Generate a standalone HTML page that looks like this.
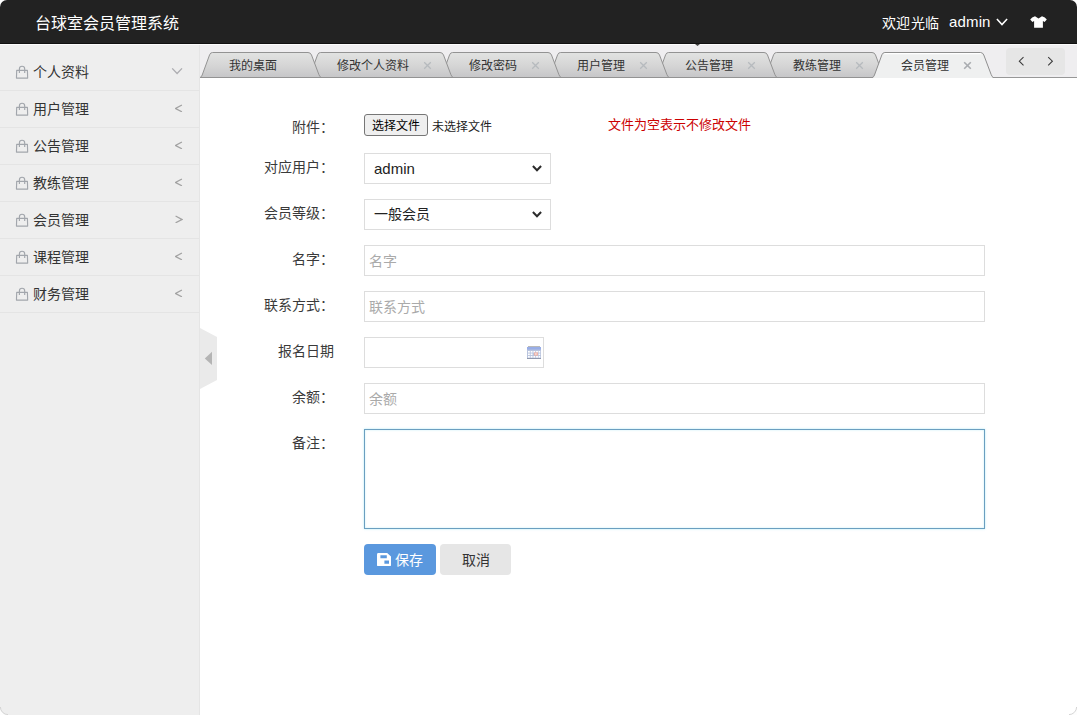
<!DOCTYPE html>
<html lang="zh-CN">
<head>
<meta charset="utf-8">
<title>台球室会员管理系统</title>
<style>
*{box-sizing:border-box;margin:0;padding:0}
html,body{width:1077px;height:715px;overflow:hidden;background:#fff}
body{font-family:"Liberation Sans",sans-serif;font-size:14px;color:#333;position:relative}
.abs{position:absolute}
/* header */
#hd{position:absolute;left:0;top:0;width:1077px;height:44px;background:#222;border-bottom:1px solid #111;border-radius:7px 7px 0 0}
#logo{position:absolute;left:35px;top:2px;height:44px;line-height:44px;font-size:16px;color:#fff;white-space:nowrap}
#wel{position:absolute;left:882px;top:1px;height:44px;line-height:44px;font-size:14px;letter-spacing:0.3px;color:#fff;white-space:nowrap}
#usr{position:absolute;left:949px;top:0;height:43px;line-height:43px;font-size:15px;letter-spacing:0.15px;color:#fff;white-space:nowrap}
/* aside */
#aside{position:absolute;left:0;top:44px;width:200px;height:671px;background:#eee;border-right:1px solid #e5e5e5;border-radius:0}
#menu{position:absolute;left:0;top:10px;width:199px;list-style:none}
#menu li{position:relative;height:37px;line-height:36px;border-bottom:1px solid #e4e4e4;padding-left:33px;font-size:14px;color:#333;white-space:nowrap}
#menu li svg.bag{position:absolute;left:15px;top:11px}
#menu li svg.arr{position:absolute;right:16px;top:13px}
/* tabs */
#tabbar{position:absolute;left:200px;top:44px;width:877px;height:34px;background:#efeef0}
#tabsvg{position:absolute;left:0;top:0}
.tab{position:absolute;top:9px;height:26px;line-height:26px;font-size:12px;color:#333;white-space:nowrap}
.tx{position:absolute;top:17px}
#more{position:absolute;left:806px;top:4px;width:59px;height:27px;background:#e6e6e6;border-radius:4px}
/* toggle */
#toggle{position:absolute;left:200px;top:328px}
/* form */
.lb{position:absolute;left:214px;width:120px;text-align:right;font-size:14px;color:#3a3a3a;height:31px;line-height:29px;white-space:nowrap}
.inp{position:absolute;left:364px;width:621px;height:31px;border:1px solid #ddd;background:#fff;font-size:14px;color:#aaa;line-height:31px;padding-left:4px;white-space:nowrap}
.sel{position:absolute;left:364px;width:187px;height:31px;border:1px solid #ddd;background:#fff;font-size:15px;color:#222;line-height:29px;padding-left:9px;white-space:nowrap}
.sel svg{position:absolute;right:8px;top:11px}
.btn{position:absolute;top:544px;height:31px;line-height:33px;border-radius:4px;font-size:14px;text-align:center;white-space:nowrap}
</style>
</head>
<body>
<div id="hd">
  <div id="logo">台球室会员管理系统</div>
  <div id="wel">欢迎光临</div>
  <div id="usr">admin</div>
  <svg class="abs" style="left:996px;top:18px" width="12" height="8" viewBox="0 0 12 8"><path d="M0.9 0.9 L6 6.5 L11.1 0.9" fill="none" stroke="#fff" stroke-width="1.55"/></svg>
  <svg class="abs" style="left:1029.6px;top:16.2px" width="17" height="12" viewBox="0 0 17 12"><path d="M5 0.2 L8.5 2.6 L12 0.2 Q15.2 1 16.8 3.4 L14.6 5.9 L12.9 4.9 L12.9 11.7 L4.1 11.7 L4.1 4.9 L2.4 5.9 L0.2 3.4 Q1.8 1 5 0.2 Z" fill="#fff"/></svg>
</div>

<div class="abs" style="left:0;top:44px;width:1077px;height:1px;background:#fcfcfc;z-index:5"></div>
<svg class="abs" style="left:695px;top:43.6px;z-index:6" width="5" height="2" viewBox="0 0 5 2"><path d="M0 0 H5 L2.5 2 Z" fill="#444"/></svg>

<div id="aside">
  <ul id="menu">
    <li><svg class="bag" width="14" height="14" viewBox="0 0 14 14"><path d="M1.7 5.3 H12.4 L12.65 13.1 H1.45 Z M4.4 8 V4 A2.65 2.75 0 0 1 9.7 4 V8" fill="none" stroke="#a2a6ac" stroke-width="1.15" stroke-linejoin="round"/></svg>个人资料<svg class="arr" style="right:16px;top:14px" width="12" height="7" viewBox="0 0 12 7"><path d="M1.2 0.4 L6.1 5.5 L11 0.4" fill="none" stroke="#adadb1" stroke-width="1.3"/></svg></li>
    <li><svg class="bag" width="14" height="14" viewBox="0 0 14 14"><path d="M1.7 5.3 H12.4 L12.65 13.1 H1.45 Z M4.4 8 V4 A2.65 2.75 0 0 1 9.7 4 V8" fill="none" stroke="#a2a6ac" stroke-width="1.15" stroke-linejoin="round"/></svg>用户管理<svg class="arr" width="8" height="8" viewBox="0 0 8 8"><path d="M6.9 1 L0.6 4.5 L6.9 7.8" fill="none" stroke="#a2a2a2" stroke-width="1.3"/></svg></li>
    <li><svg class="bag" width="14" height="14" viewBox="0 0 14 14"><path d="M1.7 5.3 H12.4 L12.65 13.1 H1.45 Z M4.4 8 V4 A2.65 2.75 0 0 1 9.7 4 V8" fill="none" stroke="#a2a6ac" stroke-width="1.15" stroke-linejoin="round"/></svg>公告管理<svg class="arr" width="8" height="8" viewBox="0 0 8 8"><path d="M6.9 1 L0.6 4.5 L6.9 7.8" fill="none" stroke="#a2a2a2" stroke-width="1.3"/></svg></li>
    <li><svg class="bag" width="14" height="14" viewBox="0 0 14 14"><path d="M1.7 5.3 H12.4 L12.65 13.1 H1.45 Z M4.4 8 V4 A2.65 2.75 0 0 1 9.7 4 V8" fill="none" stroke="#a2a6ac" stroke-width="1.15" stroke-linejoin="round"/></svg>教练管理<svg class="arr" width="8" height="8" viewBox="0 0 8 8"><path d="M6.9 1 L0.6 4.5 L6.9 7.8" fill="none" stroke="#a2a2a2" stroke-width="1.3"/></svg></li>
    <li><svg class="bag" width="14" height="14" viewBox="0 0 14 14"><path d="M1.7 5.3 H12.4 L12.65 13.1 H1.45 Z M4.4 8 V4 A2.65 2.75 0 0 1 9.7 4 V8" fill="none" stroke="#a2a6ac" stroke-width="1.15" stroke-linejoin="round"/></svg>会员管理<svg class="arr" width="8" height="8" viewBox="0 0 8 8"><path d="M0.6 1 L6.9 4.5 L0.6 7.8" fill="none" stroke="#a2a2a2" stroke-width="1.3"/></svg></li>
    <li><svg class="bag" width="14" height="14" viewBox="0 0 14 14"><path d="M1.7 5.3 H12.4 L12.65 13.1 H1.45 Z M4.4 8 V4 A2.65 2.75 0 0 1 9.7 4 V8" fill="none" stroke="#a2a6ac" stroke-width="1.15" stroke-linejoin="round"/></svg>课程管理<svg class="arr" width="8" height="8" viewBox="0 0 8 8"><path d="M6.9 1 L0.6 4.5 L6.9 7.8" fill="none" stroke="#a2a2a2" stroke-width="1.3"/></svg></li>
    <li><svg class="bag" width="14" height="14" viewBox="0 0 14 14"><path d="M1.7 5.3 H12.4 L12.65 13.1 H1.45 Z M4.4 8 V4 A2.65 2.75 0 0 1 9.7 4 V8" fill="none" stroke="#a2a6ac" stroke-width="1.15" stroke-linejoin="round"/></svg>财务管理<svg class="arr" width="8" height="8" viewBox="0 0 8 8"><path d="M6.9 1 L0.6 4.5 L6.9 7.8" fill="none" stroke="#a2a2a2" stroke-width="1.3"/></svg></li>
  </ul>
</div>

<div id="tabbar">
  <svg id="tabsvg" width="877" height="34" viewBox="0 0 877 34">
    <defs>
      <linearGradient id="g1" x1="0" y1="0" x2="0" y2="1"><stop offset="0" stop-color="#e2e3e2"/><stop offset="0.5" stop-color="#d6d6d6"/><stop offset="1" stop-color="#c6c6c8"/></linearGradient>
    </defs>
    <rect x="0" y="33" width="877" height="1" fill="#979797"/>
    <g fill="url(#g1)" stroke="#939393" stroke-width="1">
      <path transform="translate(564,0)" d="M0 33.5 Q1.4 33.2 2.2 31 L9.6 10.8 Q10.4 8.5 12.6 8.5 H108 Q110.6 8.5 111.5 11 L118.8 30.4 Q119.8 33.2 121.2 33.5 Z"/>
      <path transform="translate(456,0)" d="M0 33.5 Q1.4 33.2 2.2 31 L9.6 10.8 Q10.4 8.5 12.6 8.5 H108 Q110.6 8.5 111.5 11 L118.8 30.4 Q119.8 33.2 121.2 33.5 Z"/>
      <path transform="translate(348,0)" d="M0 33.5 Q1.4 33.2 2.2 31 L9.6 10.8 Q10.4 8.5 12.6 8.5 H108 Q110.6 8.5 111.5 11 L118.8 30.4 Q119.8 33.2 121.2 33.5 Z"/>
      <path transform="translate(240,0)" d="M0 33.5 Q1.4 33.2 2.2 31 L9.6 10.8 Q10.4 8.5 12.6 8.5 H108 Q110.6 8.5 111.5 11 L118.8 30.4 Q119.8 33.2 121.2 33.5 Z"/>
      <path transform="translate(108,0)" d="M0 33.5 Q1.4 33.2 2.2 31 L9.6 10.8 Q10.4 8.5 12.6 8.5 H132 Q134.6 8.5 135.5 11 L142.8 30.4 Q143.8 33.2 145.2 33.5 Z"/>
      <path transform="translate(0,0)" d="M0 33.5 Q1.4 33.2 2.2 31 L9.6 10.8 Q10.4 8.5 12.6 8.5 H108 Q110.6 8.5 111.5 11 L118.8 30.4 Q119.8 33.2 121.2 33.5 Z"/>
    </g>
    <path transform="translate(672.3,0)" d="M0 34.2 Q1.4 33.2 2.2 31 L9.6 10.8 Q10.4 8.5 12.6 8.5 H108 Q110.6 8.5 111.5 11 L118.8 30.4 Q119.8 33.2 121.2 34.2 Z" fill="#eff0f0" stroke="none"/>
    <path transform="translate(672.3,0)" d="M11.5 9.7 H109.5" fill="none" stroke="#fff" stroke-width="1.2"/>
    <path transform="translate(672.3,0)" d="M0 33.5 Q1.4 33.2 2.2 31 L9.6 10.8 Q10.4 8.5 12.6 8.5 H108 Q110.6 8.5 111.5 11 L118.8 30.4 Q119.8 33.2 121.2 33.5" fill="none" stroke="#8f8f8f" stroke-width="1"/>
  </svg>
  <div class="tab" style="left:29px">我的桌面</div>
  <div class="tab" style="left:137px">修改个人资料</div>
  <div class="tab" style="left:269px">修改密码</div>
  <div class="tab" style="left:377px">用户管理</div>
  <div class="tab" style="left:485px">公告管理</div>
  <div class="tab" style="left:593px">教练管理</div>
  <div class="tab" style="left:701px">会员管理</div>
  <svg class="tx" style="left:223px" width="9" height="9" viewBox="0 0 9 9"><path d="M1.2 1.2 L7.8 7.8 M7.8 1.2 L1.2 7.8" stroke="#b6babe" stroke-width="1.3"/></svg>
  <svg class="tx" style="left:331px" width="9" height="9" viewBox="0 0 9 9"><path d="M1.2 1.2 L7.8 7.8 M7.8 1.2 L1.2 7.8" stroke="#b6babe" stroke-width="1.3"/></svg>
  <svg class="tx" style="left:439px" width="9" height="9" viewBox="0 0 9 9"><path d="M1.2 1.2 L7.8 7.8 M7.8 1.2 L1.2 7.8" stroke="#b6babe" stroke-width="1.3"/></svg>
  <svg class="tx" style="left:547px" width="9" height="9" viewBox="0 0 9 9"><path d="M1.2 1.2 L7.8 7.8 M7.8 1.2 L1.2 7.8" stroke="#b6babe" stroke-width="1.3"/></svg>
  <svg class="tx" style="left:655px" width="9" height="9" viewBox="0 0 9 9"><path d="M1.2 1.2 L7.8 7.8 M7.8 1.2 L1.2 7.8" stroke="#b6babe" stroke-width="1.3"/></svg>
  <svg class="tx" style="left:763px" width="9" height="9" viewBox="0 0 9 9"><path d="M1.2 1.2 L7.8 7.8 M7.8 1.2 L1.2 7.8" stroke="#a9acb0" stroke-width="1.6"/></svg>
  <div id="more">
    <svg class="abs" style="left:12px;top:8.4px" width="7" height="10" viewBox="0 0 7 10"><path d="M5.5 1.1 L1.3 5.2 L5.5 9.3" fill="none" stroke="#3a3a3a" stroke-width="1.05"/></svg>
    <svg class="abs" style="left:41px;top:8.4px" width="7" height="10" viewBox="0 0 7 10"><path d="M1.2 1.1 L5.4 5.2 L1.2 9.3" fill="none" stroke="#3a3a3a" stroke-width="1.05"/></svg>
  </div>
</div>

<svg id="toggle" width="17" height="61" viewBox="0 0 17 61"><path d="M0 0 L17 9 V52 L0 61 Z" fill="#eaeaea"/><path d="M12 23.8 V36.9 L4.8 30.4 Z" fill="#b4b4b4"/></svg>

<!-- form -->
<div class="lb" style="top:113px">附件：</div>
<div class="abs" style="left:364px;top:114px;width:64px;height:22px;border:1px solid #767676;border-radius:3px;background:#efefef;font-size:12px;line-height:23px;text-align:center;color:#000;white-space:nowrap">选择文件</div>
<div class="abs" style="left:432px;top:115px;height:21px;line-height:24px;font-size:12px;color:#222;white-space:nowrap">未选择文件</div>
<div class="abs" style="left:608px;top:114px;height:21px;line-height:21px;font-size:13px;color:#c00;white-space:nowrap">文件为空表示不修改文件</div>

<div class="lb" style="top:153px">对应用户：</div>
<div class="sel" style="top:153px">admin<svg width="10" height="7" viewBox="0 0 10 7"><path d="M0.9 1 L5 5.3 L9.1 1" fill="none" stroke="#2b2b2b" stroke-width="2"/></svg></div>

<div class="lb" style="top:199px">会员等级：</div>
<div class="sel" style="top:199px;font-size:14px">一般会员<svg width="10" height="7" viewBox="0 0 10 7"><path d="M0.9 1 L5 5.3 L9.1 1" fill="none" stroke="#2b2b2b" stroke-width="2"/></svg></div>

<div class="lb" style="top:245px">名字：</div>
<div class="inp" style="top:245px">名字</div>

<div class="lb" style="top:291px">联系方式：</div>
<div class="inp" style="top:291px">联系方式</div>

<div class="lb" style="top:337px">报名日期</div>
<div class="inp" style="top:337px;width:180px"></div>
<svg class="abs" style="left:527px;top:346px" width="14" height="13" viewBox="0 0 14 13"><rect x="1" y="0" width="12" height="1" fill="#b9b9b9"/><rect x="0" y="1" width="14" height="12" fill="#b9c4de"/><rect x="0" y="1" width="14" height="2.6" fill="#98ade6"/><rect x="0" y="12" width="14" height="1" fill="#8f98ad"/><g fill="#fff"><rect x="1" y="5" width="1.8" height="1.6"/><rect x="3.7" y="5" width="1.8" height="1.6"/><rect x="6.4" y="5" width="1.8" height="1.6"/><rect x="9.1" y="5" width="1.8" height="1.6"/><rect x="11.6" y="5" width="1.6" height="1.6"/><rect x="1" y="7.5" width="1.8" height="1.6"/><rect x="3.7" y="7.5" width="1.8" height="1.6"/><rect x="11.6" y="7.5" width="1.6" height="1.6"/><rect x="1" y="10" width="1.8" height="1.6"/><rect x="3.7" y="10" width="1.8" height="1.6"/><rect x="6.4" y="10" width="1.8" height="1.6"/><rect x="9.1" y="10" width="1.8" height="1.6"/><rect x="11.6" y="10" width="1.6" height="1.6"/></g><rect x="7" y="6.4" width="4" height="3.2" fill="#eeb3a8"/><rect x="8.3" y="7" width="1.2" height="2" fill="#fbe3dd"/></svg>

<div class="lb" style="top:383px">余额：</div>
<div class="inp" style="top:383px">余额</div>

<div class="lb" style="top:429px">备注：</div>
<div class="inp" style="top:429px;height:100px;border-color:#6b9fc0;box-shadow:0 0 2px rgba(110,215,240,.55),inset 0 0 2px rgba(110,215,240,.45)"></div>

<div class="btn" style="left:364px;width:72px;background:#5a98de;color:#fff;padding-left:18px">保存</div>
<svg class="abs" style="left:376.8px;top:552.8px" width="14" height="13.4" viewBox="0 0 14 13.4"><path d="M1.4 0 H10.2 L14 3.6 V12 Q14 13.4 12.6 13.4 H1.4 Q0 13.4 0 12 V1.4 Q0 0 1.4 0 Z M3.4 2.2 V5.2 H9.8 V2.2 Z M7.4 7.6 V10.8 H12 V7.6 Z" fill="#fff" fill-rule="evenodd"/></svg>
<div class="btn" style="left:440px;width:71px;background:#e6e6e6;color:#333">取消</div>
<svg class="abs" style="left:0;top:707px;z-index:9" width="8" height="8" viewBox="0 0 8 8"><path d="M0 0 A8 8 0 0 0 8 8 L0 8 Z" fill="#fdfdfd"/><path d="M0.4 0 A7.6 7.6 0 0 0 8 7.6" fill="none" stroke="#d4d4d4" stroke-width="1"/></svg>
<svg class="abs" style="left:1069px;top:707px;z-index:9" width="8" height="8" viewBox="0 0 8 8"><path d="M8 0 A8 8 0 0 1 0 8 L8 8 Z" fill="#fdfdfd"/><path d="M7.6 0 A7.6 7.6 0 0 1 0 7.6" fill="none" stroke="#d4d4d4" stroke-width="1"/></svg>
</body>
</html>
